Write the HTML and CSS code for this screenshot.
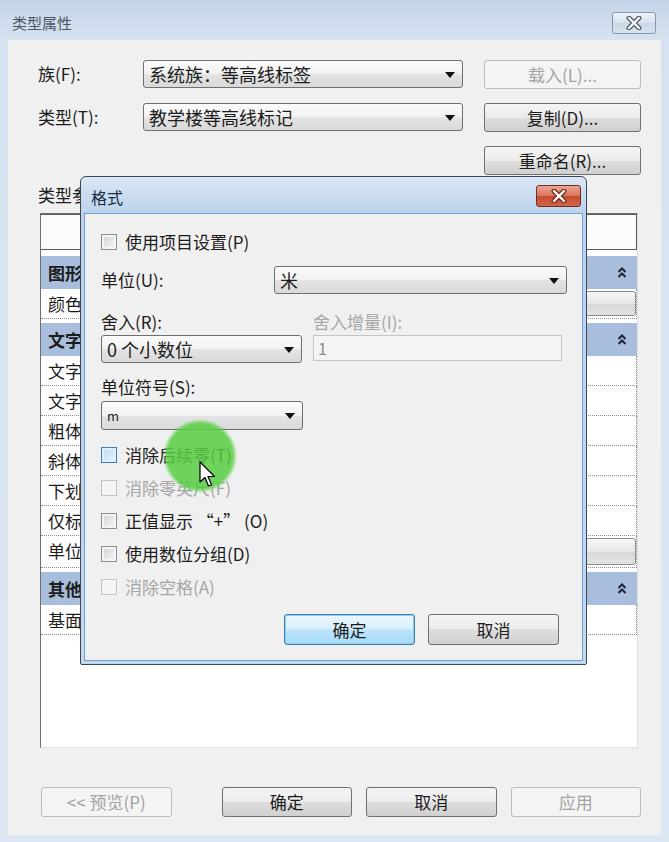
FILE: index.html
```html
<!DOCTYPE html>
<html lang="zh-CN">
<head>
    <meta charset="UTF-8">
    <title>类型属性</title>
    <link rel="stylesheet" href="styles.css">
</head>
<body>
    <div class="window">
        <div class="titlebar">
            <span class="title">类型属性</span>
            <div class="win-close">
                <svg width="18" height="14" viewBox="0 0 18 14">
                    <path d="M4 2 L14 12 M14 2 L4 12" stroke="#5b6470" stroke-width="5" stroke-linecap="round"/>
                    <path d="M4 2 L14 12 M14 2 L4 12" stroke="#fff" stroke-width="2.2" stroke-linecap="round"/>
                </svg>
            </div>
        </div>

        <div class="client">
            <div class="family-grid">
                <span class="label">族(F):</span>
                <div class="combo">系统族：等高线标签<span class="arrow"></span></div>
                <div class="btn disabled">载入(L)...</div>

                <span class="label">类型(T):</span>
                <div class="combo">教学楼等高线标记<span class="arrow"></span></div>
                <div class="btn">复制(D)...</div>

                <span></span>
                <span></span>
                <div class="btn">重命名(R)...</div>
            </div>

            <div class="section-label">类型参数</div>

            <div class="param-table">
                <div class="table-head"></div>
                <div class="group">图形<svg class="chev" width="10" height="12" viewBox="0 0 10 12"><path d="M1.5 5 L5 1.5 L8.5 5 M1.5 10 L5 6.5 L8.5 10" fill="none" stroke="#1d2533" stroke-width="2"/></svg></div>
                <div class="row">颜色<div class="value-btn"></div></div>
                <div class="group">文字<svg class="chev" width="10" height="12" viewBox="0 0 10 12"><path d="M1.5 5 L5 1.5 L8.5 5 M1.5 10 L5 6.5 L8.5 10" fill="none" stroke="#1d2533" stroke-width="2"/></svg></div>
                <div class="row">文字字体</div>
                <div class="row">文字大小</div>
                <div class="row">粗体</div>
                <div class="row">斜体</div>
                <div class="row">下划线</div>
                <div class="row">仅标记主等高线</div>
                <div class="row tall">单位格式<div class="value-btn"></div></div>
                <div class="group">其他<svg class="chev" width="10" height="12" viewBox="0 0 10 12"><path d="M1.5 5 L5 1.5 L8.5 5 M1.5 10 L5 6.5 L8.5 10" fill="none" stroke="#1d2533" stroke-width="2"/></svg></div>
                <div class="row">基面</div>
            </div>

            <div class="footer-buttons">
                <div class="btn disabled preview">&lt;&lt; 预览(P)</div>
                <div class="btn">确定</div>
                <div class="btn">取消</div>
                <div class="btn disabled">应用</div>
            </div>
        </div>
    </div>

    <div class="format-dialog">
        <div class="dlg-titlebar">
            <span class="dlg-title">格式</span>
            <div class="dlg-close">
                <svg width="18" height="14" viewBox="0 0 18 14">
                    <path d="M4 2 L14 12 M14 2 L4 12" stroke="#7a2a1c" stroke-width="5" stroke-linecap="round"/>
                    <path d="M4 2 L14 12 M14 2 L4 12" stroke="#fff" stroke-width="2.4" stroke-linecap="round"/>
                </svg>
            </div>
        </div>
        <div class="dlg-body">
            <div class="check-row first"><span class="check"></span>使用项目设置(P)</div>

            <div class="unit-row">
                <span class="label">单位(U):</span>
                <div class="combo">米<span class="arrow"></span></div>
            </div>

            <div class="round-labels">
                <span>舍入(R):</span>
                <span class="muted">舍入增量(I):</span>
            </div>
            <div class="round-fields">
                <div class="combo">0 个小数位<span class="arrow"></span></div>
                <div class="textbox">1</div>
            </div>

            <div class="symbol-label">单位符号(S):</div>
            <div class="combo symbol-combo small">m<span class="arrow"></span></div>

            <div class="check-list">
                <div class="check-row"><span class="check hot"></span>消除后续零(T)</div>
                <div class="check-row muted"><span class="check off"></span>消除零英尺(F)</div>
                <div class="check-row"><span class="check"></span>正值显示 “+” (O)</div>
                <div class="check-row"><span class="check"></span>使用数位分组(D)</div>
                <div class="check-row muted"><span class="check off"></span>消除空格(A)</div>
            </div>

            <div class="dlg-buttons">
                <div class="btn default">确定</div>
                <div class="btn">取消</div>
            </div>
        </div>
    </div>

    <div class="cursor-glow"></div>
    <svg class="cursor" width="18" height="28" viewBox="0 0 18 28">
        <path d="M1 1 L1 21 L6 16.5 L9.5 25 L12.5 23.8 L9 15.5 L15.5 15.5 Z" fill="#fff" stroke="#000" stroke-width="1.2" stroke-linejoin="round"/>
    </svg>
</body>
</html>
```

FILE: styles.css
```css
body {
    margin: 0;
    width: 669px;
    height: 842px;
    overflow: hidden;
    position: relative;
    font-family: "Noto Sans CJK SC", "Liberation Sans", sans-serif;
    color: #1c1c1c;
    background: linear-gradient(#c4d4e8, #d7e2f0 40px, #dde7f3);
}
.window {
    height: 842px;
}
.titlebar {
    height: 40px;
    box-sizing: border-box;
    display: flex;
    justify-content: space-between;
    align-items: flex-start;
    padding: 12px 13px 0 12px;
}
.title {
    font-size: 15px;
    line-height: 22px;
    color: #4e5560;
}
.win-close {
    width: 44px;
    height: 22px;
    box-sizing: border-box;
    border: 1px solid #8797ab;
    border-radius: 3px;
    background: linear-gradient(#eef3f9, #d6e1ee 50%, #c9d6e6 50%, #d9e3ef);
    display: flex;
    align-items: center;
    justify-content: center;
}
.client {
    margin: 0 8px;
    height: 795px;
    box-sizing: border-box;
    background: #f0f0f0;
    padding: 20px 20px 0 30px;
}
.family-grid {
    display: grid;
    grid-template-columns: 105px 320px 1fr;
    grid-template-rows: 28px 28px 28px;
    row-gap: 15px;
}
.family-grid .btn {
    margin-left: 21px;
}
.label {
    font-size: 17px;
    line-height: 28px;
}
.combo {
    position: relative;
    height: 28px;
    box-sizing: border-box;
    border: 1px solid #707070;
    border-radius: 3px;
    background: linear-gradient(#fbfbfb, #f1f1f1 50%, #e4e4e4 50%, #d9d9d9);
    font-size: 18px;
    line-height: 26px;
    padding-left: 5px;
    white-space: nowrap;
}
.arrow {
    position: absolute;
    right: 7px;
    top: 11px;
    width: 0;
    height: 0;
    border-left: 5px solid transparent;
    border-right: 5px solid transparent;
    border-top: 6px solid #111;
}
.btn {
    height: 29px;
    box-sizing: border-box;
    border: 1px solid #707070;
    border-radius: 3px;
    background: linear-gradient(#f4f4f4, #ececec 50%, #dedede 50%, #d0d0d0);
    font-size: 17px;
    line-height: 27px;
    text-align: center;
    white-space: nowrap;
}
.btn.disabled {
    border-color: #b8bcc0;
    background: #f4f4f4;
    color: #a3a3a3;
}
.section-label {
    margin-top: 10px;
    font-size: 17px;
    line-height: 22px;
}
.param-table {
    margin: 7px 0 0 2px;
    width: 598px;
    height: 535px;
    box-sizing: border-box;
    border: 1px solid;
    border-color: #6e6e6e #e0e0e0 #e0e0e0 #6e6e6e;
    background: #fff;
}
.table-head {
    height: 36px;
    box-sizing: border-box;
    border: 1px solid #5a5a5a;
    border-left: none;
    background: #fcfcfc;
    margin-bottom: 6px;
}
.group {
    height: 33px;
    background: #a9bedd;
    font-size: 17px;
    font-weight: bold;
    display: flex;
    align-items: center;
    justify-content: space-between;
    padding: 0 10px 0 7px;
}
.row + .group {
    margin-top: 4px;
}
.row {
    height: 30px;
    box-sizing: border-box;
    border-bottom: 1px dotted #8c8c8c;
    border-right: 1px dotted #8c8c8c;
    font-size: 17px;
    line-height: 29px;
    padding-left: 7px;
    display: flex;
    justify-content: space-between;
}
.row.tall {
    height: 32px;
}
.value-btn {
    width: 260px;
    margin: 2px 0 2px;
    box-sizing: border-box;
    border: 1px solid #8a8a8a;
    border-radius: 3px;
    background: linear-gradient(#f6f6f6, #e6e6e6 50%, #d8d8d8 50%, #e2e2e2);
}
.footer-buttons {
    display: flex;
    gap: 14px;
    margin: 39px 0 0 3px;
}
.footer-buttons .btn {
    width: 131px;
    height: 30px;
    line-height: 28px;
}
.footer-buttons .preview {
    margin-right: 36px;
}

.format-dialog {
    position: absolute;
    left: 80px;
    top: 176px;
    width: 507px;
    height: 489px;
    box-sizing: border-box;
    border: 1px solid #3c4652;
    border-radius: 6px 6px 2px 2px;
    background: linear-gradient(#dbe7f5, #bcd2ec 36px, #c4d8ee);
    padding: 0 3px 3px;
}
.dlg-titlebar {
    height: 36px;
    box-sizing: border-box;
    display: flex;
    justify-content: space-between;
    align-items: flex-start;
    padding: 8px 2px 0 7px;
}
.dlg-title {
    font-size: 16px;
    line-height: 24px;
    color: #1a2b40;
}
.dlg-close {
    width: 45px;
    height: 22px;
    box-sizing: border-box;
    border: 1px solid #6e2c22;
    border-radius: 3px;
    background: linear-gradient(#eaa592, #d9735b 50%, #c64a2e 50%, #d2664a);
    display: flex;
    align-items: center;
    justify-content: center;
}
.dlg-body {
    height: 448px;
    box-sizing: border-box;
    background: #f0f0f0;
    border: 1px solid #6ea0d8;
    padding: 0 15px 0 16px;
    font-size: 17px;
}
.check-row {
    display: flex;
    align-items: center;
    gap: 8px;
    height: 33px;
    line-height: 22px;
}
.check-row.first {
    height: 22px;
    margin-top: 17px;
}
.check {
    width: 16px;
    height: 16px;
    box-sizing: border-box;
    border: 1px solid #8e8f8f;
    background: linear-gradient(135deg, #d2d2d2, #f7f7f7);
    box-shadow: inset 0 0 0 2px #f3f3f3;
    flex: none;
}
.check.hot {
    border-color: #3c7fb1;
    background: linear-gradient(135deg, #b6daf3, #eaf6fd);
    box-shadow: inset 0 0 0 2px #def0fb;
}
.check.off {
    border-color: #c4c4c4;
    background: #f5f5f5;
    box-shadow: none;
}
.muted {
    color: #a6a6a6;
}
.unit-row {
    display: grid;
    grid-template-columns: 173px 1fr;
    margin-top: 13px;
}
.round-labels {
    display: grid;
    grid-template-columns: 201px 1fr;
    column-gap: 11px;
    margin-top: 17px;
    line-height: 22px;
}
.round-fields {
    display: grid;
    grid-template-columns: 201px 249px;
    column-gap: 11px;
    margin-top: 2px;
}
.textbox {
    height: 26px;
    box-sizing: border-box;
    border: 1px solid #c2c6ca;
    background: #f4f4f4;
    color: #8c8c8c;
    font-size: 16px;
    line-height: 24px;
    padding-left: 4px;
}
.symbol-label {
    margin-top: 13px;
    line-height: 22px;
}
.symbol-combo {
    width: 202px;
    height: 29px;
    margin-top: 3px;
}
.combo.small {
    font-size: 13px;
    line-height: 27px;
}
.check-list {
    margin-top: 8px;
}
.dlg-buttons {
    display: flex;
    justify-content: flex-end;
    gap: 13px;
    margin: 11px 8px 0 0;
}
.dlg-buttons .btn {
    width: 131px;
    height: 31px;
    line-height: 29px;
}
.btn.default {
    border-color: #3c7fb1;
    background: linear-gradient(#eaf6fd, #d9f0fc 50%, #bee6fd 50%, #a7d9f5);
    box-shadow: inset 0 0 0 1px #8ecbef;
}
.cursor-glow {
    position: absolute;
    left: 165px;
    top: 421px;
    width: 70px;
    height: 70px;
    border-radius: 50%;
    background: rgba(86, 206, 66, 0.85);
    filter: blur(1.5px);
}
.cursor {
    position: absolute;
    left: 199px;
    top: 461px;
}
```
